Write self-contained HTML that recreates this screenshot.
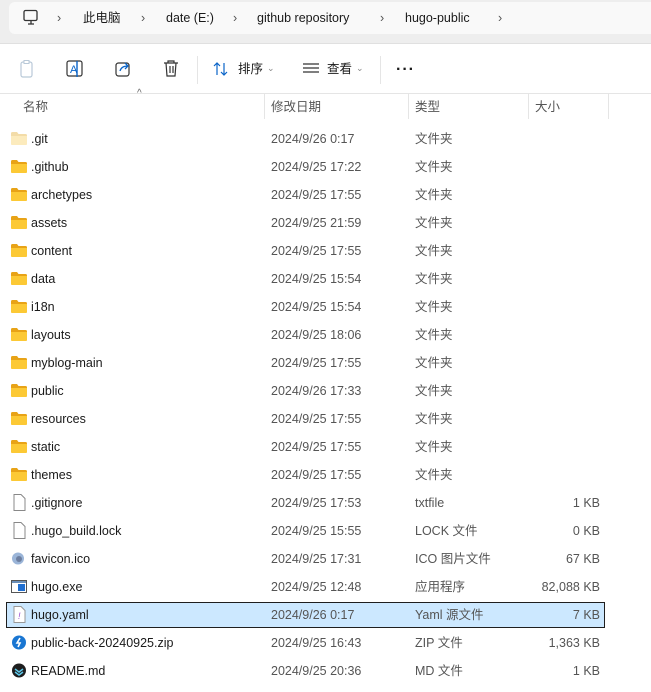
<!DOCTYPE html>
<html><head><meta charset="utf-8"><style>
*{margin:0;padding:0;box-sizing:border-box}
body{width:651px;height:692px;background:#fff;font-family:"Liberation Sans","Noto Sans CJK SC",sans-serif;font-size:12.5px;line-height:16px;color:#1a1a1a;position:relative;overflow:hidden}
.top{position:absolute;left:0;top:0;width:651px;height:44px;background:#eeeeee;border-bottom:1px solid #e0e0e0}
.crumb{position:absolute;left:9px;top:2px;width:660px;height:32px;background:#f9f9f9;border-radius:6px}
.t{position:absolute;white-space:nowrap}
.sep{position:absolute;top:94px;width:1px;height:25px;background:#e5e5e5}
.row{position:absolute;left:0;width:651px;height:28px}
.row span{position:absolute;top:0;line-height:28px}
.row .n{left:31px}
.row .d{left:271px;color:#555}
.row .y{left:415px;color:#555}
.row .s{right:51px;color:#555}
.fold{position:absolute;left:11px;top:7px;width:16px;height:13px}
.sel{position:absolute;left:6px;top:602px;width:599px;height:26px;background:#cce8ff;border:1px solid #1f1f1f}
.gray{color:#555}
</style></head><body>
<div class="top"><div class="crumb"></div></div>
<svg class="t" style="left:22px;top:9px" width="18" height="17" viewBox="0 0 18 17"><rect x="2" y="1.5" width="13" height="10" rx="1.5" fill="none" stroke="#333" stroke-width="1.3"/><path d="M6 15h6M9 11.5v3.5" stroke="#333" stroke-width="1.3"/></svg>
<div class="t" style="left:57px;top:10px;color:#555">›</div>
<div class="t" style="left:83px;top:10px">此电脑</div>
<div class="t" style="left:141px;top:10px;color:#555">›</div>
<div class="t" style="left:166px;top:10px">date (E:)</div>
<div class="t" style="left:233px;top:10px;color:#555">›</div>
<div class="t" style="left:257px;top:10px">github repository</div>
<div class="t" style="left:380px;top:10px;color:#555">›</div>
<div class="t" style="left:405px;top:10px">hugo-public</div>
<div class="t" style="left:498px;top:10px;color:#555">›</div>

<svg class="t" style="left:18px;top:59px" width="18" height="20"><rect x="3" y="3" width="11" height="15" rx="2" fill="none" stroke="#b9c9d8" stroke-width="1.2"/><rect x="6" y="1.5" width="5" height="3" fill="#fff" stroke="#b9c9d8"/></svg>
<svg class="t" style="left:65px;top:59px" width="20" height="20"><rect x="2" y="2" width="15" height="15" rx="2" fill="none" stroke="#333" stroke-width="1.2"/><text x="5" y="14" font-size="11" fill="#0a64c8" font-family="Liberation Sans">A</text><path d="M12 2v16" stroke="#0a64c8" stroke-width="1.4"/></svg>
<svg class="t" style="left:114px;top:59px" width="20" height="20"><rect x="2" y="4" width="13" height="13" rx="2.5" fill="none" stroke="#333" stroke-width="1.2"/><path d="M6 12c1-4 4-5 8-5M11 4l3 3-3 3" fill="none" stroke="#0a64c8" stroke-width="1.3"/></svg>
<svg class="t" style="left:162px;top:59px" width="20" height="20"><path d="M2 4h14M6 4V2h6v2M4 4l1 13h8l1-13M8 7v7M11 7v7" fill="none" stroke="#333" stroke-width="1.2"/></svg>
<div style="position:absolute;left:197px;top:56px;width:1px;height:28px;background:#e5e5e5"></div>
<svg class="t" style="left:212px;top:60px" width="18" height="18"><path d="M5 15V3M2 6l3-3 3 3M12 3v12M9 12l3 3 3-3" fill="none" stroke="#0a64c8" stroke-width="1.2"/></svg>
<div class="t" style="left:238px;top:61px">排序</div>
<div class="t" style="left:267px;top:60px;color:#888;font-size:9px">⌄</div>
<svg class="t" style="left:302px;top:61px" width="18" height="16"><path d="M1 3h16M1 7h16M1 11h16" stroke="#333" stroke-width="1.2"/></svg>
<div class="t" style="left:327px;top:61px">查看</div>
<div class="t" style="left:356px;top:60px;color:#888;font-size:9px">⌄</div>
<div style="position:absolute;left:380px;top:56px;width:1px;height:28px;background:#e5e5e5"></div>
<div class="t" style="left:396px;top:62px;font-size:16px;font-weight:bold;letter-spacing:1px">···</div>
<div style="position:absolute;left:0;top:93px;width:651px;height:1px;background:#e5e5e5"></div>

<div class="t" style="left:137px;top:86px;color:#666;font-size:10px">^</div>
<div class="t gray" style="left:23px;top:99px">名称</div>
<div class="t gray" style="left:271px;top:99px">修改日期</div>
<div class="t gray" style="left:415px;top:99px">类型</div>
<div class="t gray" style="left:535px;top:99px">大小</div>
<div class="sep" style="left:264px"></div><div class="sep" style="left:408px"></div><div class="sep" style="left:528px"></div><div class="sep" style="left:608px"></div>

<div class="sel"></div>
<div id="rows"></div>
<script>
const R=[
[".git","2024/9/26 0:17","文件夹","","fh"],
[".github","2024/9/25 17:22","文件夹","","f"],
["archetypes","2024/9/25 17:55","文件夹","","f"],
["assets","2024/9/25 21:59","文件夹","","f"],
["content","2024/9/25 17:55","文件夹","","f"],
["data","2024/9/25 15:54","文件夹","","f"],
["i18n","2024/9/25 15:54","文件夹","","f"],
["layouts","2024/9/25 18:06","文件夹","","f"],
["myblog-main","2024/9/25 17:55","文件夹","","f"],
["public","2024/9/26 17:33","文件夹","","f"],
["resources","2024/9/25 17:55","文件夹","","f"],
["static","2024/9/25 17:55","文件夹","","f"],
["themes","2024/9/25 17:55","文件夹","","f"],
[".gitignore","2024/9/25 17:53","txtfile","1 KB","p"],
[".hugo_build.lock","2024/9/25 15:55","LOCK 文件","0 KB","p"],
["favicon.ico","2024/9/25 17:31","ICO 图片文件","67 KB","i"],
["hugo.exe","2024/9/25 12:48","应用程序","82,088 KB","e"],
["hugo.yaml","2024/9/26 0:17","Yaml 源文件","7 KB","y"],
["public-back-20240925.zip","2024/9/25 16:43","ZIP 文件","1,363 KB","z"],
["README.md","2024/9/25 20:36","MD 文件","1 KB","m"]];
const ic={
f:'<svg class="fold" viewBox="0 0 16 13"><path d="M0 1.5Q0 0 1.5 0H6l1.5 2H14.5Q16 2 16 3.5V11.5Q16 13 14.5 13H1.5Q0 13 0 11.5Z" fill="#e8a317"/><path d="M0 4H16V11.5Q16 13 14.5 13H1.5Q0 13 0 11.5Z" fill="#fcc935"/></svg>',
fh:'<svg class="fold" viewBox="0 0 16 13"><path d="M0 1.5Q0 0 1.5 0H6l1.5 2H14.5Q16 2 16 3.5V11.5Q16 13 14.5 13H1.5Q0 13 0 11.5Z" fill="#f3dca8"/><path d="M0 4H16V11.5Q16 13 14.5 13H1.5Q0 13 0 11.5Z" fill="#fcebbd"/></svg>',
p:'<svg class="fold" style="top:5px;height:17px" viewBox="0 0 16 17"><path d="M3 .5h7l4 4v12H3z" fill="#fff" stroke="#888"/></svg>',
y:'<svg class="fold" style="top:5px;height:17px" viewBox="0 0 16 17"><path d="M3 .5h7l4 4v12H3z" fill="#fff" stroke="#999"/><text x="7" y="13" font-size="9" fill="#9a4dd0" font-style="italic">!</text></svg>',
i:'<svg class="fold" viewBox="0 0 16 13"><circle cx="7" cy="6.5" r="6" fill="#9bb5d8"/><circle cx="8" cy="7" r="3" fill="#6d7fa0"/></svg>',
e:'<svg class="fold" viewBox="0 0 16 13"><rect x=".5" y=".5" width="15" height="12" fill="#fff" stroke="#555"/><rect x="1" y="1" width="14" height="2" fill="#6b8fb8"/><rect x="7" y="4" width="7" height="7" fill="#1f6fd1"/></svg>',
z:'<svg class="fold" style="top:6px;height:15px" viewBox="0 0 16 15"><circle cx="8" cy="7.5" r="7" fill="#1976d2"/><path d="M9 3l-3 5h3l-2 4" stroke="#fff" stroke-width="1.6" fill="none"/></svg>',
m:'<svg class="fold" style="top:6px;height:15px" viewBox="0 0 16 15"><circle cx="8" cy="7.5" r="7" fill="#1e1e1e"/><path d="M4 6l4 3 4-3M4 9l4 3 4-3" stroke="#5ec7e8" stroke-width="1.5" fill="none"/></svg>'};
let h='';R.forEach((r,i)=>{h+=`<div class="row" style="top:${125+28*i}px">${ic[r[4]]}<span class="n">${r[0]}</span><span class="d">${r[1]}</span><span class="y">${r[2]}</span><span class="s">${r[3]}</span></div>`});
document.getElementById('rows').innerHTML=h;
</script>
</body></html>
